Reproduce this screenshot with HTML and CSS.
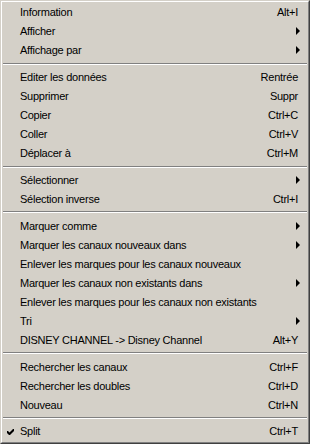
FILE: index.html
```html
<!DOCTYPE html>
<html>
<head>
<meta charset="utf-8">
<link rel="stylesheet" href="styles.css">
</head>
<body>
<div class="menu">
  <div class="menu-inner">
    <div class="item"><span class="label">Information</span><span class="key">Alt+I</span></div>
    <div class="item"><span class="label">Afficher</span><span class="arrow"></span></div>
    <div class="item"><span class="label">Affichage par</span><span class="arrow"></span></div>
    <div class="sep"></div>
    <div class="item"><span class="label">Editer les données</span><span class="key">Rentrée</span></div>
    <div class="item"><span class="label">Supprimer</span><span class="key">Suppr</span></div>
    <div class="item"><span class="label">Copier</span><span class="key">Ctrl+C</span></div>
    <div class="item"><span class="label">Coller</span><span class="key">Ctrl+V</span></div>
    <div class="item"><span class="label">Déplacer à</span><span class="key">Ctrl+M</span></div>
    <div class="sep"></div>
    <div class="item"><span class="label">Sélectionner</span><span class="arrow"></span></div>
    <div class="item"><span class="label">Sélection inverse</span><span class="key">Ctrl+I</span></div>
    <div class="sep"></div>
    <div class="item"><span class="label">Marquer comme</span><span class="arrow"></span></div>
    <div class="item"><span class="label">Marquer les canaux nouveaux dans</span><span class="arrow"></span></div>
    <div class="item"><span class="label">Enlever les marques pour les canaux nouveaux</span></div>
    <div class="item"><span class="label">Marquer les canaux non existants dans</span><span class="arrow"></span></div>
    <div class="item"><span class="label">Enlever les marques pour les canaux non existants</span></div>
    <div class="item"><span class="label">Tri</span><span class="arrow"></span></div>
    <div class="item"><span class="label">DISNEY CHANNEL -&gt; Disney Channel</span><span class="key">Alt+Y</span></div>
    <div class="sep"></div>
    <div class="item"><span class="label">Rechercher les canaux</span><span class="key">Ctrl+F</span></div>
    <div class="item"><span class="label">Rechercher les doubles</span><span class="key">Ctrl+D</span></div>
    <div class="item"><span class="label">Nouveau</span><span class="key">Ctrl+N</span></div>
    <div class="sep"></div>
    <div class="item checked">
      <svg class="check" width="8" height="8" viewBox="0 0 8 8"><path d="M0 3 L0 5 L2 7 L3 7 L7 3 L7 1 L6 1 L2.5 4.5 L1 3 Z" fill="#000"/></svg>
      <span class="label">Split</span><span class="key">Ctrl+T</span>
    </div>
  </div>
</div>
</body>
</html>
```
FILE: styles.css
```css
html, body {
  margin: 0;
  padding: 0;
  background: #d4d0c8;
}
.menu {
  width: 310px;
  height: 444px;
  box-sizing: border-box;
  border: 1px solid;
  border-color: #d4d0c8 #404040 #404040 #d4d0c8;
  background: #d4d0c8;
  font-family: "Liberation Sans", Arial, sans-serif;
  font-size: 11px;
  letter-spacing: -0.25px;
  color: #000;
}
.menu-inner {
  height: 100%;
  box-sizing: border-box;
  border: 1px solid;
  border-color: #ffffff #808080 #808080 #ffffff;
  padding: 1px 0;
  display: flex;
  flex-direction: column;
}
.item {
  position: relative;
  height: 19px;
  display: flex;
  align-items: center;
  padding: 0 10px 0 18px;
  white-space: nowrap;
}
.label {
  flex: 1;
}
.key {
  margin-left: 12px;
}
.arrow {
  width: 0;
  height: 0;
  border-top: 4px solid transparent;
  border-bottom: 4px solid transparent;
  border-left: 4px solid #000;
  margin-right: -2px;
}
.sep {
  height: 8px;
  display: flex;
  align-items: center;
  padding: 0 1px;
}
.sep::before {
  content: "";
  display: block;
  width: 100%;
  border-top: 1px solid #808080;
  border-bottom: 1px solid #ffffff;
  height: 0;
}
.check {
  position: absolute;
  left: 5px;
  top: 6px;
}
```
